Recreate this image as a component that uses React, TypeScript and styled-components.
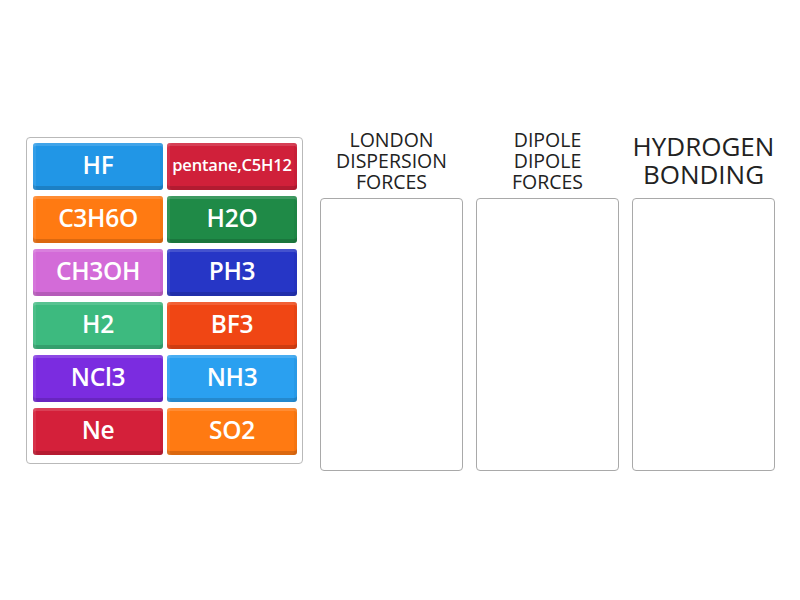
import React from "react";
import styled, { createGlobalStyle } from "styled-components";

const Global = createGlobalStyle`
  html, body { margin: 0; padding: 0; background: #ffffff; }
  body { font-family: "Open Sans", "Noto Sans", sans-serif; }
`;

const Page = styled.div`
  width: 800px;
  height: 600px;
  display: flex;
  align-items: flex-start;
  padding: 137px 0 0 26px;
  box-sizing: border-box;
  gap: 17px;
`;

const Bank = styled.div`
  width: 277px;
  height: 327px;
  box-sizing: border-box;
  border: 1px solid #b9b9b9;
  border-radius: 4px;
  padding: 5px 5px 0 6px;
  display: grid;
  grid-template-columns: 130px 130px;
  grid-auto-rows: 47px;
  column-gap: 4px;
  row-gap: 6px;
`;

const Tile = styled.div<{ $c: string; $small?: boolean }>`
  background: ${(p) => p.$c};
  border-radius: 3px;
  color: #fff;
  font-family: "Open Sans", sans-serif;
  font-weight: 600;
  font-size: ${(p) => (p.$small ? "16.5px" : "24.5px")};
  display: flex;
  align-items: center;
  justify-content: center;
  box-shadow: inset 0 3px 0 rgba(255, 255, 255, 0.14), inset 3px 0 0 rgba(255, 255, 255, 0.08),
    inset -3px 0 0 rgba(0, 0, 0, 0.04), inset 0 -4px 0 rgba(0, 0, 0, 0.14);
  padding-bottom: 5px;
  box-sizing: border-box;
  white-space: nowrap;
  letter-spacing: ${(p) => (p.$small ? "-0.2px" : "-0.3px")};
`;

const Columns = styled.div`
  display: flex;
  gap: 13px;
`;

const Column = styled.div`
  width: 143px;
  display: flex;
  flex-direction: column;
  align-items: center;
`;

const Title = styled.div<{ $big?: boolean }>`
  height: 62px;
  display: flex;
  align-items: flex-start;
  justify-content: center;
  text-align: center;
  color: #222;
  font-size: ${(p) => (p.$big ? "26px" : "19.5px")};
  line-height: ${(p) => (p.$big ? "28px" : "21px")};
  margin-top: ${(p) => (p.$big ? "-5px" : "-8px")};
  margin-bottom: ${(p) => (p.$big ? "4px" : "7px")};
  white-space: nowrap;
  box-sizing: border-box;
`;

const Drop = styled.div`
  width: 143px;
  height: 273px;
  box-sizing: border-box;
  border: 1px solid #a9a9a9;
  border-radius: 4px;
`;

const tiles: { t: string; c: string; small?: boolean }[] = [
  { t: "HF", c: "#2196e6" },
  { t: "pentane,C5H12", c: "#d0203a", small: true },
  { t: "C3H6O", c: "#ff7a12" },
  { t: "H2O", c: "#1f8a47" },
  { t: "CH3OH", c: "#d36bd8" },
  { t: "PH3", c: "#2636c6" },
  { t: "H2", c: "#3dba7f" },
  { t: "BF3", c: "#f04614" },
  { t: "NCl3", c: "#7b2ce0" },
  { t: "NH3", c: "#2aa0f0" },
  { t: "Ne", c: "#d4203a" },
  { t: "SO2", c: "#ff7a12" },
];

const cols: { lines: string[]; big?: boolean }[] = [
  { lines: ["LONDON", "DISPERSION", "FORCES"] },
  { lines: ["DIPOLE", "DIPOLE", "FORCES"] },
  { lines: ["HYDROGEN", "BONDING"], big: true },
];

export default function App() {
  return (
    <>
      <Global />
      <Page>
        <Bank>
          {tiles.map((x) => (
            <Tile key={x.t} $c={x.c} $small={x.small}>
              {x.t}
            </Tile>
          ))}
        </Bank>
        <Columns>
          {cols.map((c, i) => (
            <Column key={i}>
              <Title $big={c.big}>
                <div>
                  {c.lines.map((l, j) => (
                    <div key={j}>{l}</div>
                  ))}
                </div>
              </Title>
              <Drop />
            </Column>
          ))}
        </Columns>
      </Page>
    </>
  );
}
